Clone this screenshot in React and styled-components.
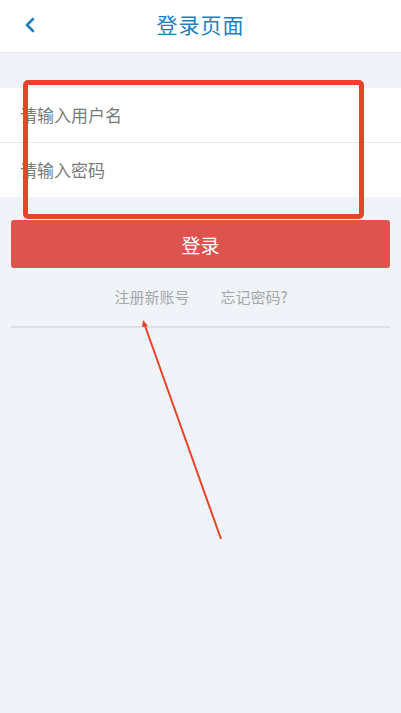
import styled, { createGlobalStyle } from "styled-components";

const GlobalStyle = createGlobalStyle`
  html, body {
    margin: 0;
    padding: 0;
    background: #f0f3f8;
  }
  body {
    font-family: "Noto Sans CJK SC", "Noto Sans", sans-serif;
  }
`;

const Page = styled.div`
  position: relative;
  min-height: 713px;
  background: #f0f3f8;
  overflow: hidden;
`;

const Header = styled.div`
  position: relative;
  height: 53px;
  box-sizing: border-box;
  padding-bottom: 5px;
  background: #fff;
  border-bottom: 1px solid #e6e8eb;
  display: flex;
  align-items: center;
  justify-content: center;
`;

const BackButton = styled.button`
  position: absolute;
  left: 20px;
  top: 13px;
  width: 20px;
  height: 24px;
  border: none;
  background: none;
  padding: 0;
  display: flex;
  align-items: center;
  justify-content: center;
`;

const Title = styled.h1`
  margin: 0;
  font-size: 21px;
  line-height: 28px;
  font-weight: 400;
  color: #1b7fc2;
  letter-spacing: 1px;
`;

const Fields = styled.div`
  margin-top: 35px;
  background: #fff;
`;

const Field = styled.div`
  height: ${(p) => (p.last ? "54px" : "55px")};
  box-sizing: border-box;
  padding: 0 0 1px 20px;
  display: flex;
  align-items: center;
  border-bottom: ${(p) => (p.last ? "none" : "1px solid #e8eaed")};
`;

const Input = styled.input`
  border: none;
  outline: none;
  width: 100%;
  background: transparent;
  font-family: inherit;
  font-size: 17px;
  color: #333;
  padding: 0;
  &::placeholder {
    color: #7b7b7b;
  }
`;

const LoginButton = styled.button`
  display: block;
  margin: 23px 11px 0;
  width: calc(100% - 22px);
  height: 48px;
  border: none;
  border-radius: 3px;
  background: #dd534e;
  color: #fff;
  font-family: inherit;
  font-size: 19px;
`;

const Links = styled.div`
  display: flex;
  justify-content: center;
  gap: 31px;
  margin-top: 18px;
  padding-left: 1px;
`;

const LinkText = styled.span`
  font-size: 15px;
  line-height: 22px;
  color: #a5a7aa;
`;

const Rule = styled.div`
  margin: 18px 11px 0;
  height: 2px;
  background: #dcdfe3;
`;

const Annotation = styled.div`
  position: absolute;
  left: 23px;
  top: 80px;
  width: 331px;
  height: 129px;
  border: 5px solid #e8432b;
  border-radius: 5px;
  pointer-events: none;
`;

const ArrowLayer = styled.svg`
  position: absolute;
  left: 0;
  top: 0;
  pointer-events: none;
`;

export default function App() {
  return (
    <Page>
      <GlobalStyle />
      <Header>
        <BackButton aria-label="返回">
          <svg width="12" height="16" viewBox="0 0 12 16">
            <path d="M9 2 L3 8 L9 14" fill="none" stroke="#1b7fc2" strokeWidth="2.6" strokeLinecap="round" strokeLinejoin="round" />
          </svg>
        </BackButton>
        <Title>登录页面</Title>
      </Header>

      <Fields>
        <Field>
          <Input placeholder="请输入用户名" />
        </Field>
        <Field last>
          <Input type="password" placeholder="请输入密码" />
        </Field>
      </Fields>

      <LoginButton>登录</LoginButton>

      <Links>
        <LinkText>注册新账号</LinkText>
        <LinkText>忘记密码?</LinkText>
      </Links>

      <Rule />

      <Annotation />
      <ArrowLayer width="401" height="713">
        <polygon points="143,320 148,326 142,327" fill="#e8432b" />
        <line x1="144" y1="323" x2="221" y2="539" stroke="#e8432b" strokeWidth="2" />
      </ArrowLayer>
    </Page>
  );
}
